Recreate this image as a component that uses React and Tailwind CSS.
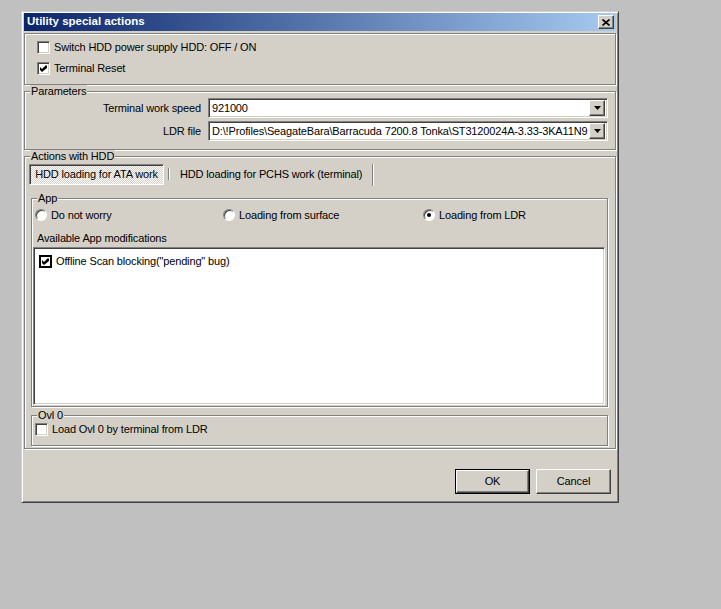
import React from 'react';

const raised =
  'border border-t-white border-l-white border-b-[#404040] border-r-[#404040] shadow-[inset_-1px_-1px_0_#808080,inset_1px_1px_0_#d4d0c8]';
const sunken =
  'border border-t-[#808080] border-l-[#808080] border-b-white border-r-white shadow-[inset_1px_1px_0_#404040,inset_-1px_-1px_0_#d4d0c8]';

function Group({ title, className, children }) {
  return (
    <div className={`relative border border-[#808080] shadow-[inset_1px_1px_0_#fff,1px_1px_0_#fff] ${className}`}>
      {title && (
        <span className="absolute top-[-7px] left-[5px] bg-[#d4d0c8] px-px leading-[12px]">{title}</span>
      )}
      {children}
    </div>
  );
}

function Tick() {
  return (
    <svg width="7" height="7" viewBox="0 0 7 7">
      <polygon points="0,2 2,4 6,0 7,1 7,3 2,7 0,5" fill="#000" />
    </svg>
  );
}

function Check({ checked, label }) {
  return (
    <div className="flex items-center gap-[4px] h-[13px]">
      <span className={`w-[13px] h-[13px] bg-white flex items-center justify-center shrink-0 ${sunken}`}>
        {checked && <Tick />}
      </span>
      <span>{label}</span>
    </div>
  );
}

function Radio({ checked, label, className }) {
  return (
    <div className={`flex items-center gap-[4px] ${className}`}>
      <span className="w-[12px] h-[12px] rounded-full bg-white border border-t-[#808080] border-l-[#808080] border-b-white border-r-white shadow-[inset_1px_1px_0_#404040] flex items-center justify-center shrink-0">
        {checked && <span className="w-[4px] h-[4px] rounded-full bg-black" />}
      </span>
      <span>{label}</span>
    </div>
  );
}

function Combo({ value }) {
  return (
    <div className={`flex w-[400px] h-[20px] bg-white p-[2px] ${sunken}`}>
      <span className="flex-1 overflow-hidden whitespace-nowrap pl-px leading-[15px]">{value}</span>
      <span className={`w-[16px] h-[16px] -mt-px bg-[#d4d0c8] flex items-center justify-center shrink-0 ${raised}`}>
        <svg width="7" height="4" viewBox="0 0 7 4">
          <polygon points="0,0 7,0 3.5,4" fill="#000" />
        </svg>
      </span>
    </div>
  );
}

function Etch() {
  return <span className="w-[2px] h-[22px] border-l border-l-[#808080] border-r border-r-white" />;
}

export default function App() {
  return (
    <div className="w-[721px] h-[609px] bg-[#c0c0c0] pl-[21px] pt-[11px] font-['Liberation_Sans',Arial,sans-serif] text-[11px] tracking-[-0.15px] text-black">
      <div className="w-[598px] h-[492px] bg-[#d4d0c8] border border-t-[#d4d0c8] border-l-[#d4d0c8] border-b-[#404040] border-r-[#404040] shadow-[inset_1px_1px_0_#fff,inset_-1px_-1px_0_#808080] p-[2px] pt-[1px] flex flex-col">
        {/* Title bar */}
        <div className="h-[18px] bg-[linear-gradient(to_right,#0a246a,#a6caf0)] flex items-center justify-between pl-[3px] pr-[2px]">
          <span className="text-white font-bold text-[11.5px] tracking-normal">Utility special actions</span>
          <span className={`w-[16px] h-[14px] bg-[#d4d0c8] flex items-center justify-center ${raised}`}>
            <svg width="8" height="7" viewBox="0 0 8 7">
              <path d="M0.5 0.5 L7.5 6.5 M7.5 0.5 L0.5 6.5" stroke="#000" strokeWidth="1.6" />
            </svg>
          </span>
        </div>

        {/* Top options */}
        <Group className="mt-[2px] h-[52px] pl-[12px] pt-[7px] flex flex-col gap-[8px]">
          <Check label="Switch HDD power supply HDD: OFF / ON" />
          <Check checked label="Terminal Reset" />
        </Group>

        {/* Parameters */}
        <Group title="Parameters" className="mt-[6px] h-[59px] pt-[6px] flex flex-col gap-[3px]">
          <div className="flex items-center gap-[7px]">
            <span className="w-[176px] text-right">Terminal work speed</span>
            <Combo value="921000" />
          </div>
          <div className="flex items-center gap-[7px]">
            <span className="w-[176px] text-right">LDR file</span>
            <Combo value="D:\!Profiles\SeagateBara\Barracuda 7200.8 Tonka\ST3120024A-3.33-3KA11N9" />
          </div>
        </Group>

        {/* Actions with HDD */}
        <Group title="Actions with HDD" className="mt-[6px] h-[293px] pt-[7px] flex flex-col">
          <div className="flex items-center h-[21px] pl-[4px]">
            <span className="w-[135px] h-[21px] flex items-center justify-center border border-t-[#808080] border-l-[#808080] border-b-white border-r-white shadow-[inset_1px_1px_0_#404040] bg-[repeating-conic-gradient(#fff_0_25%,#d4d0c8_0_50%)] bg-[length:2px_2px]">
              HDD loading for ATA work
            </span>
            <span className="ml-[4px]"><Etch /></span>
            <span className="px-[10px]">HDD loading for PCHS work (terminal)</span>
            <Etch />
          </div>

          <Group title="App" className="mt-[13px] ml-[6px] w-[577px] h-[209px] flex flex-col">
            <div className="flex items-center pt-[10px] pl-[3px] h-[22px]">
              <Radio className="w-[188px]" label="Do not worry" />
              <Radio className="w-[200px]" label="Loading from surface" />
              <Radio checked label="Loading from LDR" />
            </div>
            <div className="mt-[11px] pl-[5px] leading-[12px]">Available App modifications</div>
            <div className={`mt-[3px] ml-px w-[572px] h-[158px] bg-white p-[2px] pt-[5px] pl-[5px] ${sunken}`}>
              <div className="flex items-center gap-[4px]">
                <span className="w-[13px] h-[13px] border-2 border-black bg-white flex items-center justify-center">
                  <Tick />
                </span>
                <span>Offline Scan blocking("pending" bug)</span>
              </div>
            </div>
          </Group>

          <Group title="Ovl 0" className="mt-[8px] ml-[6px] w-[577px] h-[31px] pl-[3px] pt-[7px]">
            <Check label="Load Ovl 0 by terminal from LDR" />
          </Group>
        </Group>

        {/* Buttons */}
        <div className="mt-[20px] flex justify-end gap-[6px] pr-[5px]">
          <span className="w-[75px] h-[25px] border border-black">
            <span className={`w-full h-full flex items-center justify-center ${raised}`}>OK</span>
          </span>
          <span className={`w-[75px] h-[25px] flex items-center justify-center ${raised}`}>Cancel</span>
        </div>
      </div>
    </div>
  );
}
